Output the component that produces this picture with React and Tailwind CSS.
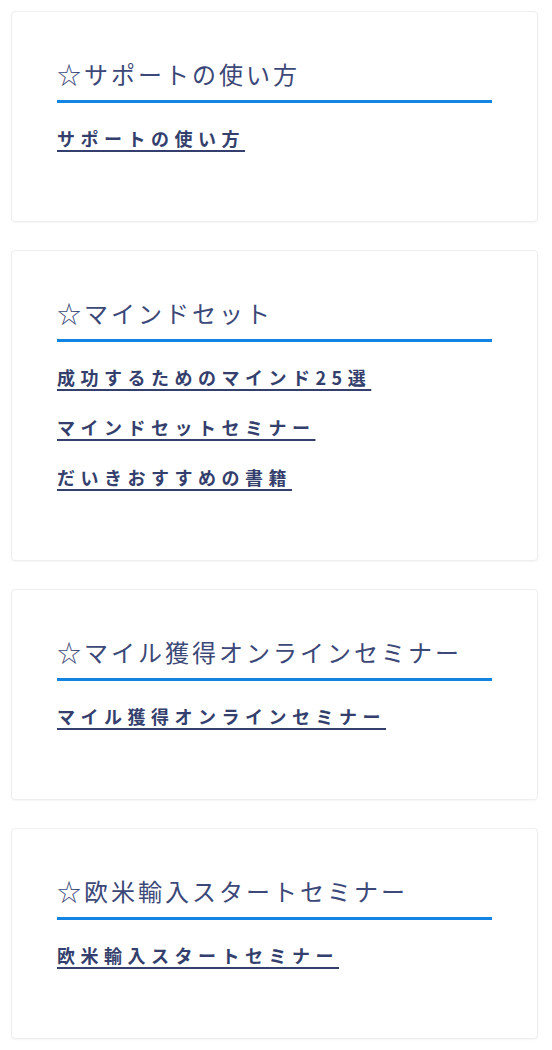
const sections = [
  { title: "☆サポートの使い方", links: ["サポートの使い方"] },
  {
    title: "☆マインドセット",
    links: ["成功するためのマインド25選", "マインドセットセミナー", "だいきおすすめの書籍"],
  },
  { title: "☆マイル獲得オンラインセミナー", links: ["マイル獲得オンラインセミナー"] },
  { title: "☆欧米輸入スタートセミナー", links: ["欧米輸入スタートセミナー"] },
];

export default function App() {
  return (
    <div
      className="bg-white min-h-[1050px] pt-[11px] pl-[11px]"
      style={{ fontFamily: '"Noto Sans CJK JP", "Noto Sans", sans-serif' }}
    >
      <div className="flex flex-col gap-[28px] w-[527px]">
        {sections.map((s) => (
          <div
            key={s.title}
            className="bg-white border border-[#eeeeee] rounded-[4px] shadow-[0_1px_2px_rgba(0,0,0,0.04)] px-[45px] pt-[44px] pb-[58px]"
          >
            <h2 className="text-[24px] leading-[36px] font-normal tracking-[3px] text-[#3b4878] pb-[8px] border-b-[3px] border-[#1384e2] whitespace-nowrap">
              {s.title}
            </h2>
            <ul className="pt-[10px]">
              {s.links.map((l) => (
                <li key={l} className="leading-[50px] h-[50px]">
                  <a
                    href="#"
                    className="text-[18px] font-bold tracking-[5.5px] text-[#343f6d] underline underline-offset-[4px] decoration-[1.5px] whitespace-nowrap"
                  >
                    {l}
                  </a>
                </li>
              ))}
            </ul>
          </div>
        ))}
      </div>
    </div>
  );
}
